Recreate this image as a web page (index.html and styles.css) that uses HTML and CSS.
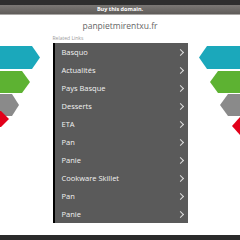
FILE: index.html
```html
<!DOCTYPE html>
<html lang="fr">
<head>
    <meta charset="UTF-8">
    <meta name="viewport" content="width=device-width, initial-scale=1.0">
    <title>panpietmirentxu.fr</title>
    <link rel="stylesheet" href="styles.css">
</head>
<body>
    <svg class="backdrop" width="240" height="240" viewBox="0 0 240 240" aria-hidden="true">
        <polygon fill="#1ba8bb" points="0,46 32,46 40,57.5 32,69 0,69"/>
        <polygon fill="#5db232" points="0,71 22,71 30,82 22,93 0,93"/>
        <polygon fill="#8a8a8a" points="0,94 12,94 19,105 12,116 0,116"/>
        <polygon fill="#e2001a" points="0,111 1,111 9,119 1,127 0,127"/>
        <polygon fill="#1ba8bb" points="240,46 207,46 199,57.5 207,69 240,69"/>
        <polygon fill="#5db232" points="240,71 218,71 210,82 218,93 240,93"/>
        <polygon fill="#8a8a8a" points="240,94 228,94 220,105 228,116 240,116"/>
        <polygon fill="#e2001a" points="240,117 240,135 232,126"/>
    </svg>

    <div class="page">
        <div class="topbar"></div>
        <div class="buybar">Buy this domain.</div>

        <h1 class="domain">panpietmirentxu.fr</h1>
        <p class="related">Related Links</p>

        <ul class="links">
            <li class="teal"><a href="#">Basquo</a></li>
            <li class="lime"><a href="#">Actualités</a></li>
            <li class="yellow"><a href="#">Pays Basque</a></li>
            <li class="orange"><a href="#">Desserts</a></li>
            <li class="navy"><a href="#">ETA</a></li>
            <li class="sea"><a href="#">Pan</a></li>
            <li class="lime"><a href="#">Panie</a></li>
            <li class="yellow"><a href="#">Cookware Skillet</a></li>
            <li class="orange"><a href="#">Pan</a></li>
            <li class="navy"><a href="#">Panie</a></li>
        </ul>

        <div class="footer"></div>
    </div>
</body>
</html>
```

FILE: styles.css
```css
body {
    margin: 0;
    background-color: #fff;
    font-family: "Open Sans", "DejaVu Sans", sans-serif;
}

.backdrop {
    position: absolute;
    top: 0;
    left: 0;
    z-index: 0;
}

.page {
    position: relative;
    z-index: 1;
    display: flex;
    flex-direction: column;
    height: 240px;
}

.topbar {
    height: 5px;
    background-color: #2e2e2e;
}

.buybar {
    height: 9px;
    line-height: 9px;
    background: linear-gradient(#7b7875, #5f5c59);
    border-bottom: 1px solid #a9a7a5;
    color: #fff;
    font-size: 5.5px;
    font-weight: bold;
    text-align: center;
}

.domain {
    margin: 5px 0 0;
    font-size: 8.5px;
    line-height: 12px;
    font-weight: normal;
    color: #666;
    text-align: center;
}

.related {
    width: 135px;
    margin: 3px auto 2px;
    font-size: 5px;
    line-height: 6px;
    color: #9a9a9a;
}

.links {
    width: 135px;
    margin: 0 auto;
    padding: 0;
    list-style: none;
    background-color: #5a5a5a;
}

.links li {
    border-left: 2px solid;
}

.links a {
    display: flex;
    align-items: center;
    justify-content: space-between;
    height: 18px;
    padding: 0 5px 0 7px;
    color: #f2f2f2;
    font-size: 7.5px;
    text-decoration: none;
}

.links a::after {
    content: "";
    width: 4px;
    height: 4px;
    border-top: 1px solid #dcdcdc;
    border-right: 1px solid #dcdcdc;
    transform: rotate(45deg);
}

.teal { border-color: #0f7078; }
.lime { border-color: #a4c93a; }
.yellow { border-color: #f1d321; }
.orange { border-color: #e8771e; }
.navy { border-color: #17475a; }
.sea { border-color: #2a8e7c; }

.footer {
    margin-top: auto;
    height: 5px;
    background-color: #2b2b2b;
}
```
